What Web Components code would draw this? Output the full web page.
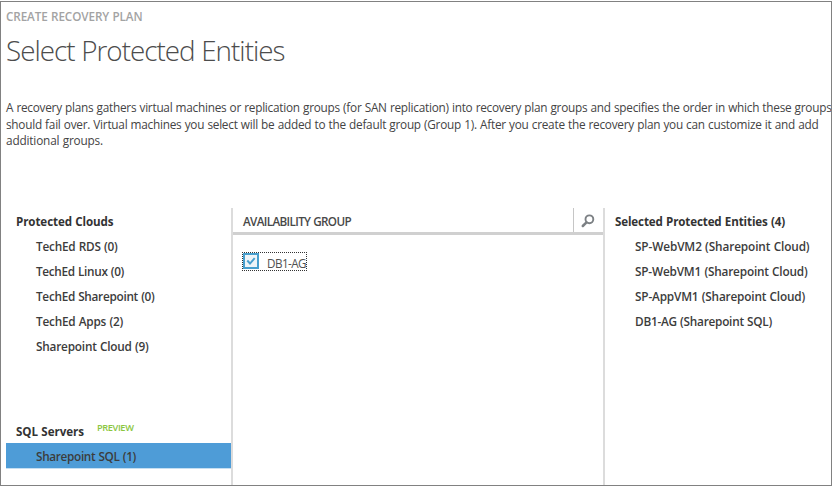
<!DOCTYPE html>
<html lang="en">
<head>
<meta charset="utf-8">
<title>Create Recovery Plan</title>
<style>
html,body{margin:0;height:100%;background:#fff;overflow:hidden}
body{font-family:"Open Sans","Noto Sans",sans-serif;font-size:12px;color:#404040;word-spacing:.4px}
</style>
</head>
<body>
<recovery-wizard></recovery-wizard>
<script>
const define = (name, html, setup) => customElements.define(name, class extends HTMLElement {
  constructor() {
    super();
    this.attachShadow({ mode: 'open' }).innerHTML = html;
  }
  connectedCallback() { if (setup) setup(this, this.shadowRoot); }
});

// One line of text, tracked so that it spans the advance width given in "w".
define('fit-text', `<style>:host{display:block;white-space:nowrap}span{display:inline-block}</style><span><slot></slot></span>`,
  (el, root) => {
    const span = root.querySelector('span');
    const gap = Number(el.getAttribute('w')) - span.getBoundingClientRect().width;
    span.style.letterSpacing = (gap / el.textContent.length) + 'px';
  });

define('wizard-heading', `<style>
:host{display:block}
.step{font-weight:600;font-size:11.7px;line-height:16px;color:#a3a3a3}
.title{font-weight:300;font-size:27.8px;line-height:36px;margin-top:8px;color:#4c4c4c}
.intro{font-size:11.8px;line-height:16.67px;margin-top:31px;color:#444}
</style>
<fit-text class="step" w="136.5">CREATE RECOVERY PLAN</fit-text>
<fit-text class="title" w="278.5">Select Protected Entities</fit-text>
<div class="intro">
<fit-text w="825.5">A recovery plans gathers virtual machines or replication groups (for SAN replication) into recovery plan groups and specifies the order in which these groups</fit-text>
<fit-text w="812.5">should fail over. Virtual machines you select will be added to the default group (Group 1). After you create the recovery plan you can customize it and add</fit-text>
<fit-text w="97">additional groups.</fit-text>
</div>`);

define('entity-group', `<style>
:host{display:block}
.head{display:flex;height:25px;padding-left:10px;gap:13px;font-weight:700;font-size:11.6px;line-height:27px;color:#333}
</style>
<div class="head"><slot name="label"></slot><slot name="tag"></slot></div><slot></slot>`);

define('entity-row', `<style>
:host{display:block;box-sizing:border-box;height:25px;padding-left:30px;font-weight:600;font-size:11.8px;line-height:27px;color:#3c3c3c}
:host([selected]){background:#4e9cd7;box-shadow:0 .5px #8cc0e6}
</style><slot></slot>`);

define('preview-tag', `<style>:host{display:block;font-weight:600;font-size:9.3px;line-height:19px;color:#8bc63f}</style><slot></slot>`);

define('search-button', `<style>
:host{display:flex;box-sizing:border-box;width:30px;height:24px;border-left:1px solid #c6c6c6;align-items:center;justify-content:center}
svg{display:block;margin:2px 1px 0 0}
</style>
<svg width="14" height="14" viewBox="0 0 14 14" fill="none" stroke="#7c8084"><circle cx="8.4" cy="5.3" r="3.9" stroke-width="1.9"/><path d="M5.5 8.3 1.8 12" stroke-width="2.5" stroke-linecap="round"/></svg>`);

define('check-option', `<style>
:host{display:flex;box-sizing:border-box;width:65px;height:19px;border:1px dotted #333;line-height:20px;font-size:11.7px;color:#505050}
svg{display:block;margin-right:8px}
</style>
<svg width="16" height="17" viewBox="0 0 16 17"><rect x="1" y="1" width="14" height="14" fill="#eef4f8" stroke="#489fce" stroke-width="2"/><path d="m4.3 7.5 2.7 3 4.7-5.4" fill="none" stroke="#489fce" stroke-width="1.9"/></svg><slot></slot>`);

define('group-table', `<style>
:host{display:block;border-left:2px solid #dcdcdc;border-right:2px solid #dcdcdc}
header{display:flex;justify-content:space-between;height:24px;border-bottom:3px solid #d0d0d0;padding-left:10px;font-weight:600;font-size:11.7px;line-height:26px;color:#484848}
.body{padding:17px 0 0 9px}
</style>
<header><slot name="label"></slot><search-button></search-button></header>
<div class="body"><slot></slot></div>`);

define('recovery-wizard', `<style>
:host{display:block;box-sizing:border-box;width:832px;height:485px;margin-top:1px;border:1px solid #818181;padding:6px 0 0 5px;overflow:hidden}
main{display:grid;grid-template-columns:225px 374px 1fr;height:278px;margin-top:59px}
.sql{margin-top:60px}
</style>
<wizard-heading></wizard-heading>
<main>
<div class="side">
<entity-group><fit-text slot="label" w="97.5">Protected Clouds</fit-text>
<entity-row><fit-text w="81.5">TechEd RDS (0)</fit-text></entity-row>
<entity-row><fit-text w="88">TechEd Linux (0)</fit-text></entity-row>
<entity-row><fit-text w="118.5">TechEd Sharepoint (0)</fit-text></entity-row>
<entity-row><fit-text w="87">TechEd Apps (2)</fit-text></entity-row>
<entity-row><fit-text w="112.5">Sharepoint Cloud (9)</fit-text></entity-row>
</entity-group>
<entity-group class="sql"><fit-text slot="label" w="68">SQL Servers</fit-text>
<preview-tag slot="tag"><fit-text w="36.5">PREVIEW</fit-text></preview-tag>
<entity-row selected><fit-text w="100">Sharepoint SQL (1)</fit-text></entity-row>
</entity-group>
</div>
<group-table><fit-text slot="label" w="108">AVAILABILITY GROUP</fit-text>
<check-option><fit-text w="39">DB1-AG</fit-text></check-option>
</group-table>
<div class="side">
<entity-group><fit-text slot="label" w="170">Selected Protected Entities (4)</fit-text>
<entity-row><fit-text w="174.5">SP-WebVM2 (Sharepoint Cloud)</fit-text></entity-row>
<entity-row><fit-text w="172.5">SP-WebVM1 (Sharepoint Cloud)</fit-text></entity-row>
<entity-row><fit-text w="170">SP-AppVM1 (Sharepoint Cloud)</fit-text></entity-row>
<entity-row><fit-text w="137">DB1-AG (Sharepoint SQL)</fit-text></entity-row>
</entity-group>
</div>
</main>`);
</script>
</body>
</html>
